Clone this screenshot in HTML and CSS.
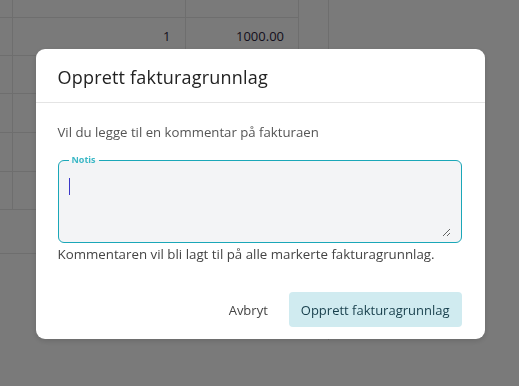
FILE: index.html
```html
<!DOCTYPE html>
<html lang="no">
<head>
  <meta charset="UTF-8">
  <meta name="viewport" content="width=device-width, initial-scale=1.0">
  <title>Opprett fakturagrunnlag</title>
  <link rel="stylesheet" href="styles.css">
</head>
<body>
  <div class="sheet">
    <table class="grid">
      <tr class="row-top"><td></td><td></td><td></td></tr>
      <tr><td></td><td class="num">1</td><td class="num">1000.00</td></tr>
      <tr><td></td><td></td><td></td></tr>
      <tr><td></td><td></td><td></td></tr>
      <tr><td></td><td></td><td></td></tr>
      <tr><td></td><td></td><td></td></tr>
      <tr class="row-sum"><td colspan="3"></td></tr>
    </table>
    <div class="gutter"></div>
  </div>

  <div class="overlay">
    <div class="modal">
      <div class="modal-header">
        <h2>Opprett fakturagrunnlag</h2>
      </div>
      <div class="modal-body">
        <p class="lead">Vil du legge til en kommentar på fakturaen</p>
        <fieldset class="note-field">
          <legend>Notis</legend>
          <textarea class="note-input"></textarea>
          <span class="caret"></span>
        </fieldset>
        <p class="hint">Kommentaren vil bli lagt til på alle markerte fakturagrunnlag.</p>
      </div>
      <div class="modal-footer">
        <button class="btn-text">Avbryt</button>
        <button class="btn-primary">Opprett fakturagrunnlag</button>
      </div>
    </div>
  </div>
</body>
</html>
```

FILE: styles.css
```css
body {
  margin: 0;
  padding: 0;
  background-color: #fff;
  font-family: "Open Sans", Arial, sans-serif;
  height: 386px;
  overflow: hidden;
}

.sheet {
  display: flex;
  align-items: flex-start;
}

.grid {
  border-collapse: collapse;
  width: 299px;
  border-right: 1px solid #e6e6e6;
}

.grid td {
  height: 38px;
  padding: 0 14px;
  border-bottom: 1px solid #e6e6e6;
  border-right: 1px solid #e6e6e6;
  font-size: 13px;
  color: #2c2440;
  box-sizing: border-box;
}

.grid td:first-child {
  width: 12px;
  padding: 0;
}

.grid td:nth-child(2) {
  width: 173px;
}

.grid .row-top td {
  height: 17px;
}

.grid tr:nth-child(4) td,
.grid tr:nth-child(5) td {
  height: 39px;
}

.grid .row-sum td {
  height: 44px;
  border-right: none;
}

.grid .num {
  text-align: right;
}

.gutter {
  width: 29px;
  height: 340px;
  border-right: 1px solid #e6e6e6;
}

.overlay {
  position: fixed;
  left: 0;
  top: 0;
  width: 100%;
  height: 100%;
  padding-top: 2px;
  box-sizing: border-box;
  background-color: rgba(0, 0, 0, 0.52);
  display: flex;
  justify-content: center;
  align-items: center;
}

.modal {
  width: 449px;
  margin-left: 1px;
  background-color: #fff;
  border-radius: 9px;
  box-shadow: 0 2px 6px rgba(0, 0, 0, 0.15);
}

.modal-header {
  padding: 16px 22px 13px;
  border-bottom: 1px solid #e4e4e4;
}

.modal-header h2 {
  margin: 0;
  font-size: 18px;
  font-weight: 400;
  line-height: 24px;
  color: #222;
  letter-spacing: 0.2px;
}

.modal-body {
  padding: 19px 23px 0 22px;
}

.lead {
  margin: 0 0 14px;
  font-size: 13.2px;
  line-height: 20px;
  color: #555;
}

.note-field {
  position: relative;
  margin: 0;
  padding: 0 10px 5px;
  border: 1px solid #1aa7b8;
  border-radius: 6px;
  background-color: #f3f4f6;
}

.note-field legend {
  margin-left: 0;
  padding: 0 3px;
  font-size: 9px;
  font-weight: 700;
  line-height: 8px;
  color: #3bb8c6;
}

.note-input {
  display: block;
  width: 100%;
  height: 73px;
  margin: 0;
  padding: 4px 0 0 1px;
  border: none;
  outline: none;
  background: transparent;
  resize: vertical;
  font-family: inherit;
  font-size: 13px;
  box-sizing: border-box;
}

.caret {
  position: absolute;
  left: 10px;
  top: 14px;
  width: 1px;
  height: 17px;
  background-color: #3b38c8;
}

.hint {
  margin: 2px 0 0;
  font-size: 13.3px;
  line-height: 18px;
  color: #444;
}

.modal-footer {
  display: flex;
  justify-content: flex-end;
  align-items: center;
  gap: 11px;
  padding: 29px 23px 12px;
}

.btn-text,
.btn-primary {
  font-family: inherit;
  font-size: 13px;
  font-weight: 500;
  border: none;
  border-radius: 4px;
  cursor: pointer;
  height: 35px;
}

.btn-text {
  background: none;
  color: #444;
  padding: 0 10px;
}

.btn-primary {
  background-color: #d0ebf0;
  color: #173f4c;
  padding: 0 12px;
}
```
